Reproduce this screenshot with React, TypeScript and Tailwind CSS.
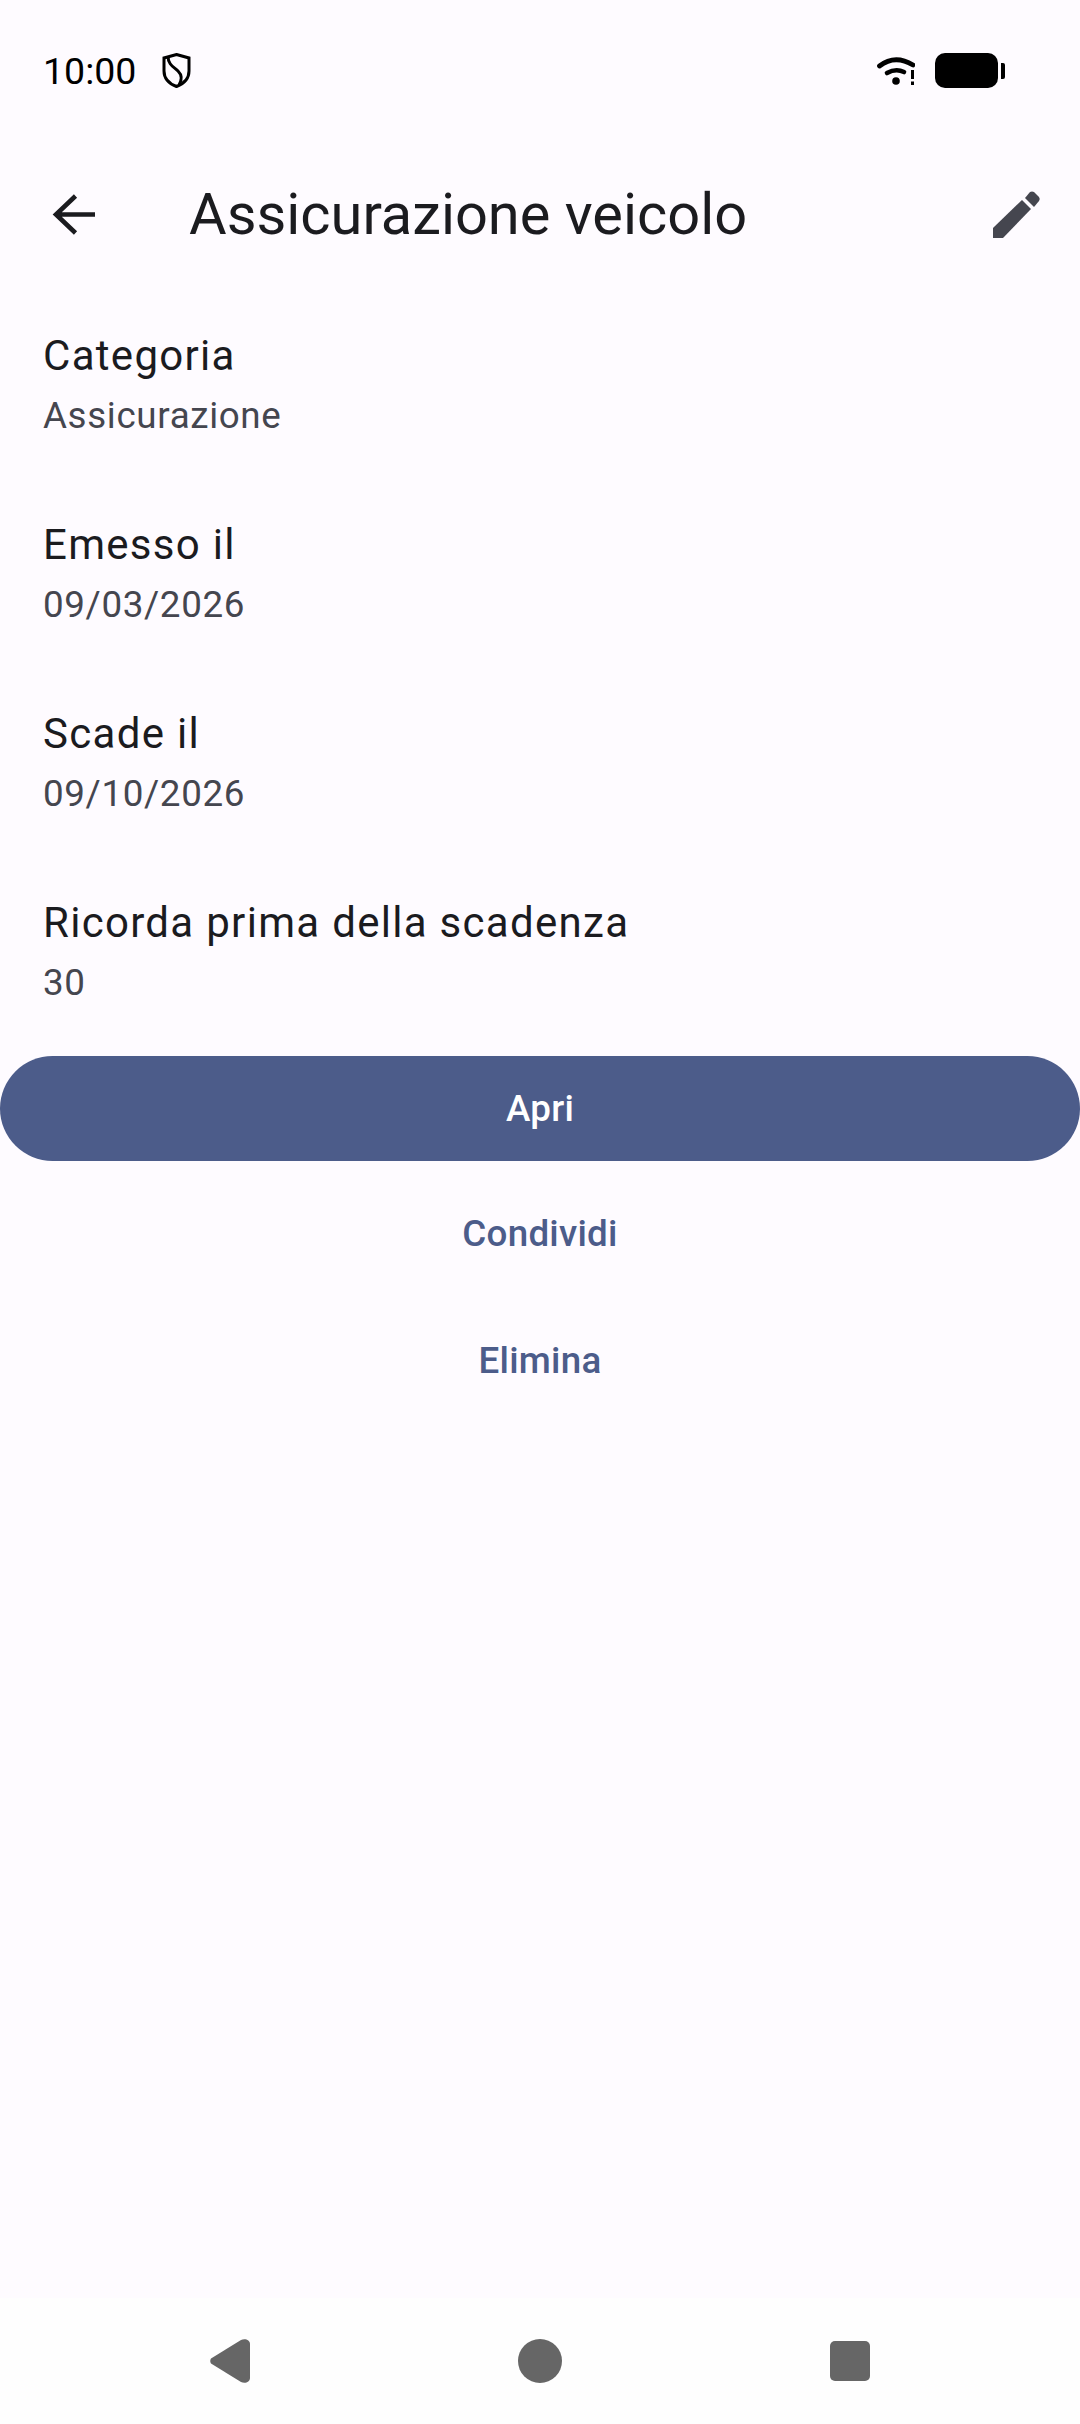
const Field = ({ label, value }: { label: string; value: string }) => (
  <div className="flex h-[189px] flex-col px-[43px] pt-[40px]">
    <p className="text-[42px] leading-[56px] tracking-[1.3px] text-[#1b1b1f]">{label}</p>
    <p className="mt-[6px] text-[36.75px] leading-[52px] tracking-[0.65px] text-[#45464f]">{value}</p>
  </div>
);

const StatusBar = () => (
  <div className="flex h-[141px] items-center justify-between pl-[43px] pr-[75px]">
    <div className="flex items-center gap-[26px]">
      <span className="text-[37.5px] leading-[46px] text-black">10:00</span>
      <svg width="29" height="35" viewBox="0 0 29 35" fill="none" stroke="black" strokeWidth="3">
        <path d="M14.5 1.5 L27 5 V18 C27 26 21 31 14.5 33.5 C8 31 2 26 2 18 V5 Z" />
        <path d="M6 3 C6 12 12 14 16 18 C20 22 20 27 17 32" />
      </svg>
    </div>
    <div className="flex items-center gap-[20px]">
      <svg width="38" height="28" viewBox="0 0 38 28" fill="none" stroke="black">
        <path d="M2.5 9 Q18 -3 36 8" strokeWidth="4.8" strokeLinecap="round" />
        <path d="M10 16 Q19 11 27 15" strokeWidth="4.6" strokeLinecap="round" />
        <circle cx="19" cy="24" r="3.8" fill="black" stroke="none" />
        <rect x="34" y="13" width="3" height="9" fill="black" stroke="none" />
        <rect x="34" y="24.5" width="3" height="3.5" fill="black" stroke="none" />
      </svg>
      <div className="flex items-center gap-[3px]">
        <div className="h-[35px] w-[63px] rounded-[10px] bg-black" />
        <div className="h-[16px] w-[4px] rounded-r-[2px] bg-black" />
      </div>
    </div>
  </div>
);

const App = () => (
  <div className="flex h-[2424px] w-[1080px] flex-col bg-[#fefbff] font-['Roboto',sans-serif]">
    <StatusBar />
    <div className="flex h-[147px] items-center justify-between pl-[52px] pr-[39px]">
      <div className="flex items-center">
        <svg width="43" height="42" viewBox="0 0 43 42" fill="none" stroke="#1b1b1f" strokeWidth="4.6">
          <path d="M43 20.5 H3.5 M23.5 2 L4 20.5 L23.5 39" />
        </svg>
        <h1 className="ml-[94px] -translate-y-[1px] text-[57.75px] font-normal leading-[74px] text-[#1b1b1f]">Assicurazione veicolo</h1>
      </div>
      <svg width="48" height="48" viewBox="0 0 48 48" fill="#45464f">
        <path d="M0 47 V37 L29 9 L38 18 L10 47 Z" />
        <path d="M32 7 L37 1 Q39 0 41 1 L46 6 Q47.5 8 46 10 L41 16 Z" />
      </svg>
    </div>
    <div className="flex flex-col">
      <Field label="Categoria" value="Assicurazione" />
      <Field label="Emesso il" value="09/03/2026" />
      <Field label="Scade il" value="09/10/2026" />
      <Field label="Ricorda prima della scadenza" value="30" />
    </div>
    <div className="mt-[12px] flex h-[105px] w-full items-center justify-center rounded-full bg-[#4c5c8a] text-[36.75px] font-medium tracking-[0.26px] text-white">
      Apri
    </div>
    <div className="mt-[10px] flex h-[126px] items-center justify-center text-[36.75px] font-medium tracking-[0.26px] text-[#4c5c8a]">Condividi</div>
    <div className="flex h-[127px] items-center justify-center text-[36.75px] font-medium tracking-[0.26px] text-[#4c5c8a]">Elimina</div>
    <div className="flex-1" />
    <div className="flex h-[126px] items-center justify-center bg-[#fefefe] pr-[1px]">
      <div className="flex w-[660px] items-center justify-between">
        <svg width="40" height="44" viewBox="0 0 40 44" fill="#666666">
          <path d="M1 19.5 L31 1 C35 -1 40 1 40 5 V39 C40 43 35 45 31 43 L1 24.5 C0 23 0 21 1 19.5 Z" />
        </svg>
        <div className="h-[44px] w-[44px] rounded-full bg-[#666666]" />
        <div className="h-[40px] w-[40px] rounded-[5px] bg-[#666666]" />
      </div>
    </div>
  </div>
);

export default App;
